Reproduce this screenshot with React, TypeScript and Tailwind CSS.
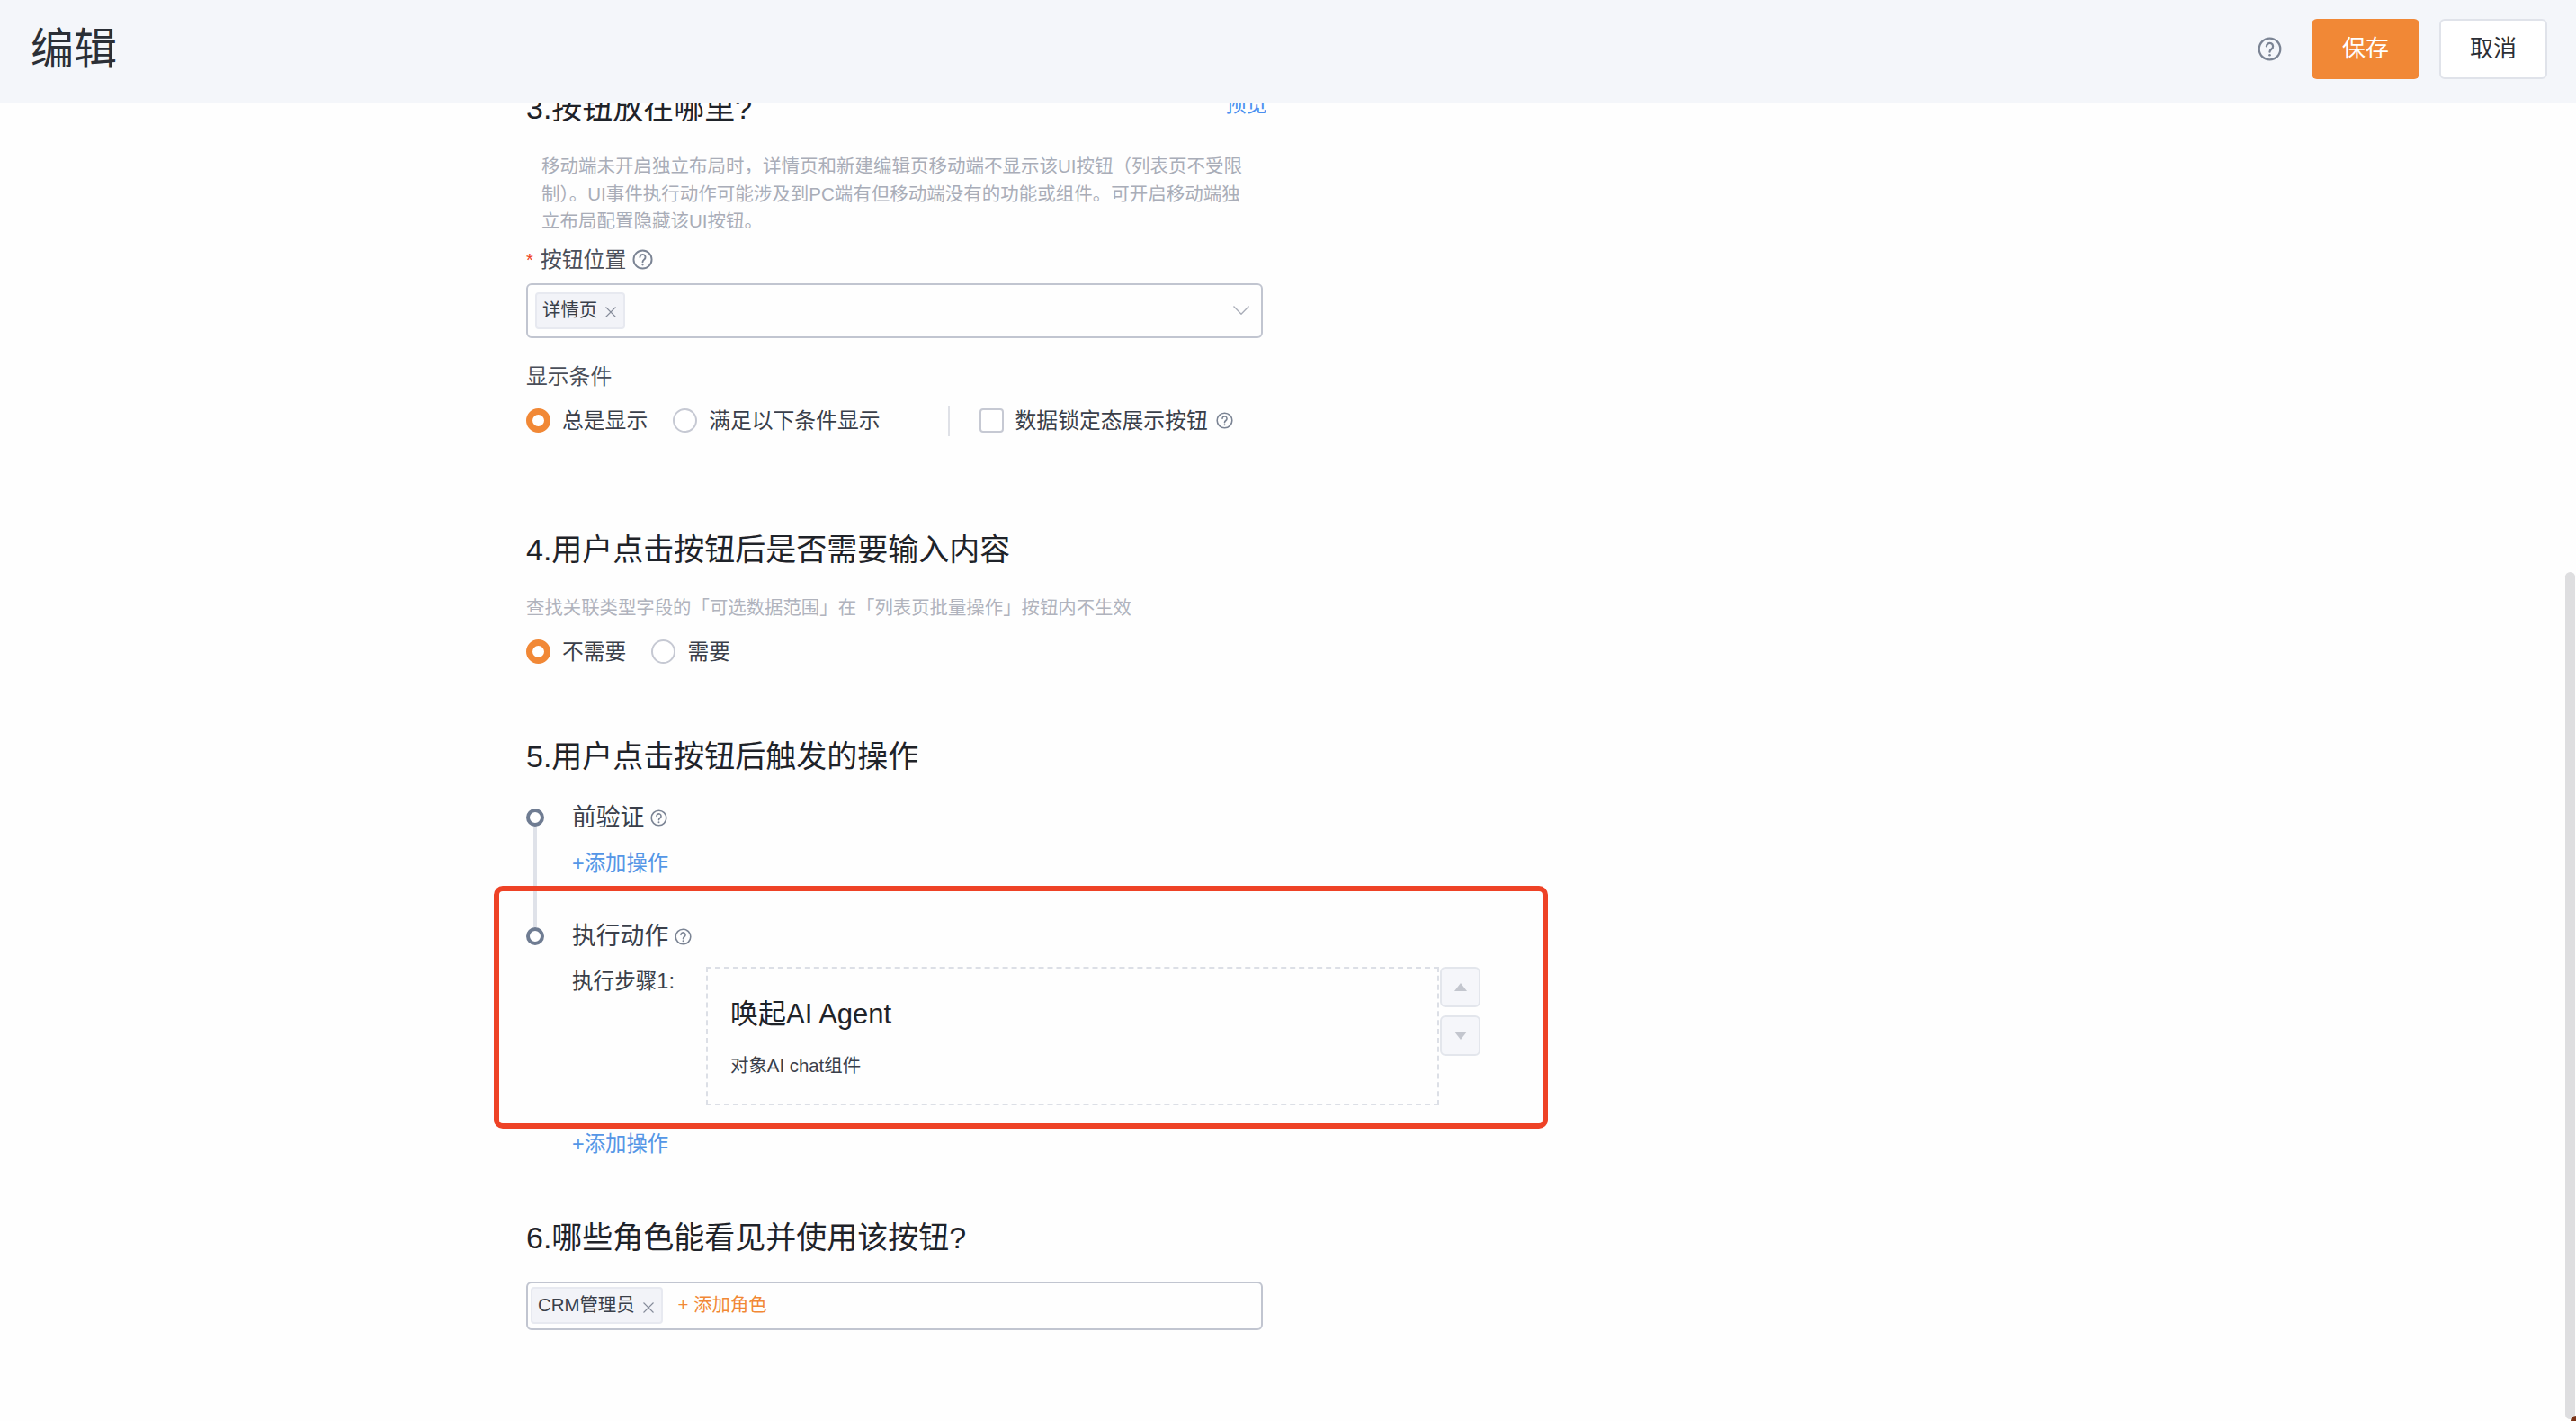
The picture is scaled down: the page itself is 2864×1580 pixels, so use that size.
const FONT = "font-['Liberation_Sans','Noto_Sans_CJK_SC',sans-serif]";

function Help({ size = 23 }: { size?: number }) {
  return (
    <svg width={size} height={size} viewBox="0 0 24 24" fill="none" stroke="#7b8494" strokeWidth="2" className="shrink-0">
      <circle cx="12" cy="12" r="10.5" />
      <path d="M8.8 9.3a3.2 3.2 0 1 1 5 2.7c-1.1.8-1.8 1.4-1.8 2.8" strokeLinecap="round" />
      <circle cx="12" cy="18" r="1.2" fill="#7b8494" stroke="none" />
    </svg>
  );
}

function Radio({ checked, label }: { checked?: boolean; label: string }) {
  return (
    <div className="flex items-center gap-[13px]">
      <span
        className={
          checked
            ? "size-[27px] rounded-full border-[7px] border-[#f18836] bg-white"
            : "size-[27px] rounded-full border-2 border-[#c6c9d3] bg-white"
        }
      />
      <span className="text-[23.8px] leading-[32px] text-[#3a3f4a]">{label}</span>
    </div>
  );
}

function Heading({ children }: { children: React.ReactNode }) {
  return <h2 className="text-[34px] leading-[44px] font-normal text-[#1f2329]">{children}</h2>;
}

function Tag({ label }: { label: string }) {
  return (
    <span className="flex h-[41px] items-center rounded-[4px] border-2 border-[#e7e9f0] bg-[#f2f3f8] pr-[8px] pl-[6px] text-[20.4px] text-[#3a3f4a]">
      {label}
      <svg width="12" height="12" viewBox="0 0 12 12" stroke="#858c9a" strokeWidth="1.1" className="mt-[4px] ml-[9px]">
        <path d="M.5.5l11 11M11.5.5l-11 11" />
      </svg>
    </span>
  );
}

function AddAction({ className }: { className: string }) {
  return <a className={`block pl-[51px] text-[23.4px] leading-[32px] text-[#5596e6] ${className}`}>+添加操作</a>;
}

function Step({ label }: { label: string }) {
  return (
    <div className="flex items-center">
      <span className="z-10 size-[20px] rounded-full border-[4px] border-[#6f7c92] bg-white" />
      <span className="ml-[31px] text-[26.8px] leading-[36px] text-[#3a3f4a]">{label}</span>
      <span className="mt-[2px] ml-[7px]"><Help size={19} /></span>
    </div>
  );
}

export default function App() {
  return (
    <div className={`${FONT} relative flex h-[1580px] flex-col overflow-hidden bg-[#fefefe]`}>
      {/* Top bar */}
      <header className="z-10 flex h-[114px] shrink-0 items-center bg-[#f4f6fa] pr-[32px] pb-[5px] pl-[34px]">
        <h1 className="text-[48px] font-normal text-[#2b2f36]">编辑</h1>
        <div className="ml-auto flex items-center">
          <Help size={27} />
          <button className="ml-[33px] h-[67px] w-[120px] rounded-[6px] bg-[#f18836] text-[26px] text-white">保存</button>
          <button className="ml-[22px] h-[67px] w-[120px] rounded-[6px] border-2 border-[#e0e3ea] bg-white text-[26px] text-[#2b2f36]">取消</button>
        </div>
      </header>

      <main className="ml-[585px] w-[824px]">
        {/* Section 3, scrolled partly under the top bar */}
        <section className="-mt-[16px]">
          <div className="flex items-start justify-between">
            <Heading>3.按钮放在哪里?</Heading>
            <a className="pt-[3px] text-[23.4px] leading-[30px] text-[#4a8ff0]">预览</a>
          </div>
          <p className="mt-[28px] w-[800px] pl-[17px] text-[20.5px] leading-[30.5px] text-[#a9adb8]">
            移动端未开启独立布局时，详情页和新建编辑页移动端不显示该UI按钮（列表页不受限制）。UI事件执行动作可能涉及到PC端有但移动端没有的功能或组件。可开启移动端独立布局配置隐藏该UI按钮。
          </p>
          <div className="mt-[11px] flex items-center text-[23.8px] leading-[32px] text-[#4a4f5a]">
            <span className="w-[16px] text-[20px] text-[#ee4226]">*</span>
            按钮位置
            <span className="ml-[7px]"><Help size={23} /></span>
          </div>
          <div className="mt-[10px] flex h-[61px] w-[819px] items-center rounded-[6px] border-2 border-[#c1c5d0] pr-[13px] pl-[8px]">
            <Tag label="详情页" />
            <svg width="18" height="10" viewBox="0 0 18 10" fill="none" stroke="#a9adb8" strokeWidth="1.3" className="ml-auto">
              <path d="M.5.5 9 9.3 17.5.5" />
            </svg>
          </div>
          <div className="mt-[27px] text-[23.8px] leading-[32px] text-[#4a4f5a]">显示条件</div>
          <div className="mt-[16px] flex items-center">
            <Radio checked label="总是显示" />
            <div className="ml-[28px]"><Radio label="满足以下条件显示" /></div>
            <span className="ml-[75px] h-[34px] w-[2px] bg-[#dfe1e7]" />
            <span className="ml-[33px] size-[27px] rounded-[4px] border-2 border-[#c6c9d3] bg-white" />
            <span className="ml-[13px] text-[23.8px] leading-[32px] text-[#3a3f4a]">数据锁定态展示按钮</span>
            <span className="ml-[9px]"><Help size={19} /></span>
          </div>
        </section>

        {/* Section 4 */}
        <section className="mt-[104px]">
          <Heading>4.用户点击按钮后是否需要输入内容</Heading>
          <p className="mt-[28px] text-[20.4px] leading-[30px] text-[#b0b3bd]">
            查找关联类型字段的「可选数据范围」在「列表页批量操作」按钮内不生效
          </p>
          <div className="mt-[18px] flex items-center gap-[28px]">
            <Radio checked label="不需要" />
            <Radio label="需要" />
          </div>
        </section>

        {/* Section 5 */}
        <section className="mt-[78px]">
          <Heading>5.用户点击按钮后触发的操作</Heading>
          <div className="relative mt-[28px]">
            <span className="absolute top-[10px] left-[8px] h-[130px] w-[4px] bg-[#dfe2e9]" />
            <Step label="前验证" />
            <AddAction className="mt-[17px]" />
            <div className="mt-[47px]"><Step label="执行动作" /></div>
            <div className="mt-[16px] flex items-start pl-[51px]">
              <span className="mt-[1px] w-[149px] shrink-0 text-[23.6px] leading-[30px] whitespace-nowrap text-[#3a3f4a]">执行步骤1:</span>
              <div className="flex h-[154px] w-[815px] shrink-0 flex-col border-2 border-dashed border-[#dcdfe6] pt-[27px] pl-[25px]">
                <div className="text-[31px] leading-[48px] text-[#1f2329]">唤起AI Agent</div>
                <div className="mt-[18px] text-[20.4px] leading-[30px] text-[#3a3f4a]">对象AI chat组件</div>
              </div>
              <div className="ml-[1px] flex flex-col gap-[9px]">
                <button className="flex size-[45px] items-center justify-center rounded-[6px] border-2 border-[#e3e6ec] bg-[#f5f6fa]">
                  <span className="h-0 w-0 border-x-[7px] border-b-[9px] border-x-transparent border-b-[#c3c6ce]" />
                </button>
                <button className="flex size-[45px] items-center justify-center rounded-[6px] border-2 border-[#e3e6ec] bg-[#f5f6fa]">
                  <span className="h-0 w-0 border-x-[7px] border-t-[9px] border-x-transparent border-t-[#c3c6ce]" />
                </button>
              </div>
            </div>
            <AddAction className="mt-[27px]" />
          </div>
        </section>

        {/* Section 6 */}
        <section className="mt-[66px]">
          <Heading>6.哪些角色能看见并使用该按钮?</Heading>
          <div className="mt-[27px] flex h-[54px] w-[819px] items-center rounded-[6px] border-2 border-[#c1c5d0] pl-[3px]">
            <Tag label="CRM管理员" />
            <span className="ml-[17px] text-[20.4px] text-[#f18836]">+ 添加角色</span>
          </div>
        </section>
      </main>

      {/* Annotation drawn over the screenshot */}
      <div className="absolute top-[985px] left-[549px] h-[270px] w-[1172px] rounded-[10px] border-[6px] border-[#ee4226]" />
      {/* Scrollbar */}
      <div className="absolute top-[636px] right-[1px] bottom-[2px] w-[11px] rounded-full bg-[#dedee0]" />
      {/* Window corner */}
      <div className="absolute right-0 bottom-0 size-[6px] rounded-tl-full bg-[#7a3418]" />
    </div>
  );
}
